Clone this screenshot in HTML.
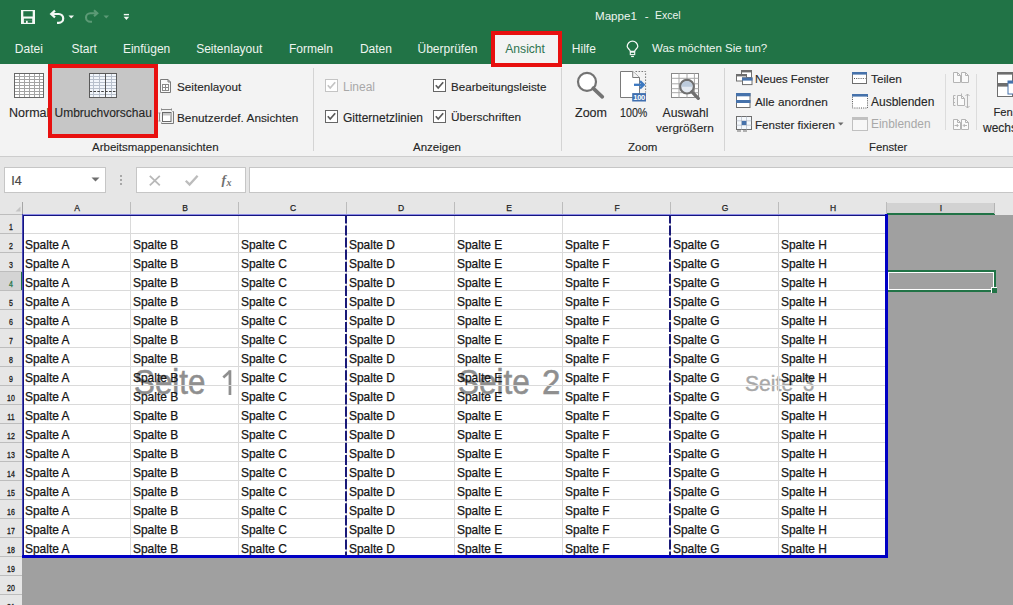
<!DOCTYPE html>
<html><head><meta charset="utf-8"><style>
html,body{margin:0;padding:0;width:1013px;height:605px;overflow:hidden;background:#a0a0a0;}
body{position:relative;font-family:"Liberation Sans",sans-serif;}
.t{position:absolute;white-space:nowrap;line-height:1;font-family:"Liberation Sans",sans-serif;}
.r{position:absolute;}
.s{position:absolute;overflow:visible;}
.hd{text-align:center;font-size:8.5px;line-height:11px;color:#1e1e1e;-webkit-text-stroke:0.25px #1e1e1e;}
.rh{text-align:center;font-size:8.5px;line-height:8px;transform:scaleX(0.82);-webkit-text-stroke:0.3px currentColor;}
</style></head><body>
<div class="r" style="left:0px;top:0px;width:1013px;height:64px;background:#217346;"></div>
<svg class="s" style="left:20px;top:9px;" width="16" height="16" viewBox="0 0 16 16"><rect x="1" y="1" width="14" height="14" fill="#f4f8f5"/><rect x="3.3" y="2.2" width="9.4" height="5.3" fill="#217346"/><rect x="3.9" y="9.6" width="8.3" height="2.1" fill="#217346"/><rect x="3.9" y="11.5" width="2.1" height="2.3" fill="#217346"/><rect x="7.7" y="11.5" width="4.5" height="2.3" fill="#217346"/></svg>
<svg class="s" style="left:48px;top:8px;" width="18" height="17" viewBox="0 0 18 17"><path d="M4 6 H10.8 A4.4 4.4 0 0 1 10.8 14.8 H9" fill="none" stroke="#f4f8f5" stroke-width="2.2"/><path d="M7 2.6 L3.2 6 L7 9.4" fill="none" stroke="#f4f8f5" stroke-width="2.2"/></svg>
<svg class="s" style="left:68px;top:15px;" width="7" height="4" viewBox="0 0 7 4"><path d="M0.5 0.5 H6 L3.25 3.5 Z" fill="#f4f8f5"/></svg>
<svg class="s" style="left:83px;top:7px;" width="18" height="17" viewBox="0 0 18 17"><path d="M13.6 6.2 H7.3 A4.3 4.3 0 0 0 7.3 14.8 H9" fill="none" stroke="#5c9a76" stroke-width="2.1"/><path d="M11 3.3 L14.3 6.2 L11 9.1" fill="none" stroke="#5c9a76" stroke-width="2.1"/></svg>
<svg class="s" style="left:103px;top:15px;" width="7" height="4" viewBox="0 0 7 4"><path d="M0.5 0.5 H6 L3.25 3.5 Z" fill="#5c9a76"/></svg>
<svg class="s" style="left:122px;top:12px;" width="9" height="9" viewBox="0 0 9 9"><rect x="1.8" y="1.9" width="5.2" height="1.4" fill="#f4f8f5"/><path d="M1.6 4.8 H7.2 L4.4 8 Z" fill="#f4f8f5"/></svg>
<div class="t" style="left:595.00px;top:10.29px;font-size:11.6px;color:#eef5f0;">Mappe1</div>
<div class="t" style="left:644.80px;top:10.29px;font-size:11.6px;color:#eef5f0;">-</div>
<div class="t" style="left:655.30px;top:10.37px;font-size:11.5px;color:#eef5f0;transform-origin:0 0;transform:scaleX(0.91);">Excel</div>
<div class="t" style="left:14.80px;top:42.85px;font-size:12px;color:#eef5f0;">Datei</div>
<div class="t" style="left:71.50px;top:42.85px;font-size:12px;color:#eef5f0;">Start</div>
<div class="t" style="left:122.90px;top:42.85px;font-size:12px;color:#eef5f0;">Einfügen</div>
<div class="t" style="left:196.20px;top:42.85px;font-size:12px;color:#eef5f0;">Seitenlayout</div>
<div class="t" style="left:288.90px;top:42.85px;font-size:12px;color:#eef5f0;">Formeln</div>
<div class="t" style="left:359.90px;top:42.85px;font-size:12px;color:#eef5f0;">Daten</div>
<div class="t" style="left:417.50px;top:42.85px;font-size:12px;color:#eef5f0;">Überprüfen</div>
<div class="t" style="left:571.80px;top:42.85px;font-size:12px;color:#eef5f0;">Hilfe</div>
<div class="r" style="left:491px;top:31px;width:71px;height:36px;background:#f3f3f3;border:4px solid #e8100f;box-sizing:border-box;"></div>
<div class="t" style="left:505.30px;top:42.76px;font-size:12.1px;color:#2f7350;">Ansicht</div>
<svg class="s" style="left:625px;top:40px;" width="16" height="18" viewBox="0 0 16 18"><path d="M5.3 11.3 C5.1 9.6 2.2 8.3 2.2 6.5 A5.3 5.3 0 1 1 12.8 6.5 C12.8 8.3 9.9 9.6 9.7 11.3 Z" fill="none" stroke="#f4f8f5" stroke-width="1.25"/><rect x="5.3" y="12.2" width="4.4" height="2.4" fill="none" stroke="#f4f8f5" stroke-width="1.1"/><path d="M6.1 16.5 H8.9" stroke="#f4f8f5" stroke-width="1.2"/></svg>
<div class="t" style="left:652.00px;top:43.27px;font-size:11.5px;color:#eef5f0;">Was möchten Sie tun?</div>
<div class="r" style="left:0px;top:64px;width:1013px;height:92px;background:#f3f3f3;"></div>
<div class="r" style="left:491px;top:64px;width:71px;height:3px;background:#e8100f;"></div>
<div class="r" style="left:0px;top:156px;width:1013px;height:1px;background:#cdcdcd;"></div>
<div class="r" style="left:313px;top:68px;width:1px;height:83px;background:#d4d4d4;"></div>
<div class="r" style="left:561px;top:68px;width:1px;height:83px;background:#d4d4d4;"></div>
<div class="r" style="left:724px;top:68px;width:1px;height:83px;background:#d4d4d4;"></div>
<div class="r" style="left:945px;top:74px;width:1px;height:56px;background:#dcdcdc;"></div>
<div class="r" style="left:976px;top:74px;width:1px;height:56px;background:#dcdcdc;"></div>
<svg class="s" style="left:13px;top:72px;" width="33" height="27" viewBox="0 0 33 27"><rect x="1.5" y="1.5" width="29" height="24" fill="#fff"/><path d="M6.5 1.5 V25.5" stroke="#a4a4a4" stroke-width="1"/><path d="M11.5 1.5 V25.5" stroke="#a4a4a4" stroke-width="1"/><path d="M16.5 1.5 V25.5" stroke="#a4a4a4" stroke-width="1"/><path d="M21.5 1.5 V25.5" stroke="#a4a4a4" stroke-width="1"/><path d="M26.5 1.5 V25.5" stroke="#a4a4a4" stroke-width="1"/><path d="M1.5 4.5 H30.5" stroke="#a4a4a4" stroke-width="1"/><path d="M1.5 7.5 H30.5" stroke="#a4a4a4" stroke-width="1"/><path d="M1.5 10.5 H30.5" stroke="#a4a4a4" stroke-width="1"/><path d="M1.5 13.5 H30.5" stroke="#a4a4a4" stroke-width="1"/><path d="M1.5 16.5 H30.5" stroke="#a4a4a4" stroke-width="1"/><path d="M1.5 19.5 H30.5" stroke="#a4a4a4" stroke-width="1"/><path d="M1.5 22.5 H30.5" stroke="#a4a4a4" stroke-width="1"/><rect x="1.5" y="1.5" width="29" height="24" fill="none" stroke="#666" stroke-width="1"/></svg>
<div class="t" style="left:9.00px;top:107.42px;font-size:12.5px;color:#262626;-webkit-text-stroke:0.12px #262626;">Normal</div>
<div class="r" style="left:48px;top:64px;width:110px;height:74px;background:#c6c6c6;border:4px solid #e8100f;box-sizing:border-box;"></div>
<svg class="s" style="left:88px;top:72px;" width="31" height="27" viewBox="0 0 31 27"><rect x="1.5" y="1.5" width="27" height="24" fill="#f2f6fb"/><path d="M5.5 1.5 V25.5" stroke="#b8c0cc" stroke-width="1"/><path d="M11.5 1.5 V25.5" stroke="#b8c0cc" stroke-width="1"/><path d="M23.5 1.5 V25.5" stroke="#b8c0cc" stroke-width="1"/><path d="M1.5 4.5 H28.5" stroke="#b8c0cc" stroke-width="1"/><path d="M1.5 7.5 H28.5" stroke="#b8c0cc" stroke-width="1"/><path d="M1.5 10.5 H28.5" stroke="#b8c0cc" stroke-width="1"/><path d="M1.5 13.5 H28.5" stroke="#b8c0cc" stroke-width="1"/><path d="M1.5 16.5 H28.5" stroke="#b8c0cc" stroke-width="1"/><path d="M1.5 22.5 H28.5" stroke="#b8c0cc" stroke-width="1"/><path d="M17.5 1.5 V25.5" stroke="#555" stroke-width="1"/><path d="M1.5 19.5 H28.5" stroke="#444" stroke-width="1.1" stroke-dasharray="2.6 1.3"/><rect x="1.5" y="1.5" width="27" height="24" fill="none" stroke="#5a5a5a" stroke-width="1"/></svg>
<div class="t" style="left:54.50px;top:106.85px;font-size:12px;color:#262626;-webkit-text-stroke:0.12px #262626;">Umbruchvorschau</div>
<svg class="s" style="left:159px;top:78px;" width="14" height="16" viewBox="0 0 14 16"><path d="M1.5 1.5 H9 L11.5 4 V14.5 H1.5 Z" fill="#fafafa" stroke="#7a7a7a"/><path d="M9 1.5 V4 H11.5" fill="none" stroke="#7a7a7a"/><rect x="3.5" y="6.5" width="6" height="6" fill="#fff" stroke="#8a8a8a"/><path d="M6.5 6.5 V12.5 M3.5 9.5 H9.5" stroke="#8a8a8a"/></svg>
<div class="t" style="left:177.00px;top:81.10px;font-size:11.7px;color:#262626;-webkit-text-stroke:0.12px #262626;">Seitenlayout</div>
<svg class="s" style="left:157px;top:108px;" width="18" height="18" viewBox="0 0 18 18"><path d="M4.5 1.5 H14.5 M4.5 0.5 V2.5 M14.5 0.5 V2.5 M2.5 5 V13 M1.5 5 H3.5 M1.5 13 H3.5" fill="none" stroke="#8a8a8a"/><rect x="5.5" y="4.5" width="8.5" height="9" fill="#fff" stroke="#6a6a6a"/><rect x="6" y="5" width="7.5" height="2.5" fill="#c8c8c8"/><path d="M15.5 3.5 H16.5 V15.5 H4.5 V14.5" fill="none" stroke="#7a7a7a"/></svg>
<div class="t" style="left:177.00px;top:112.82px;font-size:11.8px;color:#262626;-webkit-text-stroke:0.12px #262626;">Benutzerdef. Ansichten</div>
<div class="t" style="left:92.00px;top:142.37px;font-size:11.5px;color:#262626;-webkit-text-stroke:0.12px #262626;">Arbeitsmappenansichten</div>
<svg class="s" style="left:325px;top:79px;" width="13" height="13" viewBox="0 0 13 13"><rect x="0.5" y="0.5" width="12" height="12" fill="#fff" stroke="#c4c4c4"/><path d="M2.8 6.3 L5.2 9 L10.2 3.2" fill="none" stroke="#c4c4c4" stroke-width="1.7"/></svg>
<div class="t" style="left:343.00px;top:80.85px;font-size:12px;color:#a8a8a8;">Lineal</div>
<svg class="s" style="left:325px;top:110px;" width="13" height="13" viewBox="0 0 13 13"><rect x="0.5" y="0.5" width="12" height="12" fill="#fff" stroke="#666"/><path d="M2.8 6.3 L5.2 9 L10.2 3.2" fill="none" stroke="#5a5a5a" stroke-width="1.7"/></svg>
<div class="t" style="left:343.00px;top:111.85px;font-size:12px;color:#262626;-webkit-text-stroke:0.12px #262626;">Gitternetzlinien</div>
<svg class="s" style="left:433px;top:79px;" width="13" height="13" viewBox="0 0 13 13"><rect x="0.5" y="0.5" width="12" height="12" fill="#fff" stroke="#666"/><path d="M2.8 6.3 L5.2 9 L10.2 3.2" fill="none" stroke="#5a5a5a" stroke-width="1.7"/></svg>
<div class="t" style="left:451.00px;top:81.19px;font-size:11.6px;color:#262626;-webkit-text-stroke:0.12px #262626;">Bearbeitungsleiste</div>
<svg class="s" style="left:433px;top:110px;" width="13" height="13" viewBox="0 0 13 13"><rect x="0.5" y="0.5" width="12" height="12" fill="#fff" stroke="#666"/><path d="M2.8 6.3 L5.2 9 L10.2 3.2" fill="none" stroke="#5a5a5a" stroke-width="1.7"/></svg>
<div class="t" style="left:451.00px;top:112.02px;font-size:11.8px;color:#262626;-webkit-text-stroke:0.12px #262626;">Überschriften</div>
<div class="t" style="left:413.00px;top:142.27px;font-size:11.5px;color:#262626;-webkit-text-stroke:0.12px #262626;">Anzeigen</div>
<svg class="s" style="left:575px;top:70px;" width="32" height="30" viewBox="0 0 32 30"><circle cx="12" cy="11.8" r="9" fill="#fff" stroke="#737373" stroke-width="2.2"/><path d="M18.3 18.3 L27.3 26.8" stroke="#737373" stroke-width="3.7" stroke-linecap="round"/></svg>
<div class="t" style="left:575.00px;top:107.42px;font-size:12.5px;color:#262626;-webkit-text-stroke:0.12px #262626;">Zoom</div>
<svg class="s" style="left:619px;top:70px;" width="30" height="33" viewBox="0 0 30 33"><path d="M1.5 1.5 H13.7 L20.5 7.5 V27.5 H1.5 Z" fill="#fff" stroke="#7a7a7a"/><path d="M13.7 1.5 V7.5 H20.5" fill="#f4f4f4" stroke="#7a7a7a"/><path d="M16.5 1.5 H26.6 V22.5" fill="none" stroke="#7a7a7a" stroke-dasharray="1.6 1.4"/><path d="M15 14.8 H24.2" stroke="#3c78c0" stroke-width="2.3"/><path d="M21 11.2 L24.8 14.8 L21 18.4" fill="none" stroke="#3c78c0" stroke-width="2.3"/><rect x="13.2" y="23.1" width="13.8" height="8.4" fill="#3f6fb0"/><text x="20.1" y="30.2" font-size="7.6" font-family="Liberation Sans" fill="#fff" text-anchor="middle" font-weight="bold" letter-spacing="-0.3">100</text></svg>
<div class="t" style="left:619.50px;top:106.85px;font-size:12px;color:#262626;-webkit-text-stroke:0.12px #262626;transform-origin:0 0;transform:scaleX(0.89);">100%</div>
<svg class="s" style="left:670px;top:72px;" width="32" height="30" viewBox="0 0 32 30"><rect x="1.5" y="1.5" width="27" height="24" fill="#fff" stroke="#8a8a8a"/><path d="M9 1.5 V25.5 M17 1.5 V25.5 M24.4 1.5 V25.5 M1.5 6.3 H28.5 M1.5 11.8 H28.5 M1.5 16.7 H28.5 M1.5 20.7 H28.5" stroke="#a8a8a8"/><circle cx="17" cy="14.7" r="6.8" fill="#e4eaf1" stroke="#707070" stroke-width="2.2"/><path d="M11.3 14.7 A5.7 5.7 0 0 1 22.7 14.7 Z" fill="#bccbdc"/><path d="M22 19.8 L28.3 26.3" stroke="#707070" stroke-width="3.3" stroke-linecap="round"/></svg>
<div class="t" style="left:662.50px;top:106.68px;font-size:12.2px;color:#262626;-webkit-text-stroke:0.12px #262626;">Auswahl</div>
<div class="t" style="left:656.00px;top:122.52px;font-size:11.8px;color:#262626;-webkit-text-stroke:0.12px #262626;">vergrößern</div>
<div class="t" style="left:628.00px;top:142.27px;font-size:11.5px;color:#262626;-webkit-text-stroke:0.12px #262626;">Zoom</div>
<svg class="s" style="left:735px;top:69px;" width="18" height="17" viewBox="0 0 18 17"><rect x="6.5" y="1.5" width="10" height="7" fill="#fff" stroke="#6e6e6e"/><rect x="6" y="1" width="11" height="2.4" fill="#6e6e6e"/><rect x="1.5" y="5.5" width="10" height="6.5" fill="#fff" stroke="#6e6e6e"/><rect x="1" y="5" width="11" height="2.4" fill="#6e6e6e"/><rect x="7.5" y="8.8" width="9.5" height="6.8" fill="#fff" stroke="#6e6e6e"/><rect x="7" y="8.6" width="10.5" height="3" fill="#4672ab"/></svg>
<div class="t" style="left:755.00px;top:74.24px;font-size:11.3px;color:#262626;-webkit-text-stroke:0.12px #262626;">Neues Fenster</div>
<svg class="s" style="left:736px;top:93px;" width="15" height="15" viewBox="0 0 15 15"><rect x="0.5" y="0.5" width="13.5" height="14" fill="#fff" stroke="#6e6e6e"/><rect x="0" y="0" width="14.5" height="3.3" fill="#4672ab"/><rect x="0" y="7" width="14.5" height="3" fill="#4672ab"/></svg>
<div class="t" style="left:755.00px;top:96.72px;font-size:11.8px;color:#262626;-webkit-text-stroke:0.12px #262626;">Alle anordnen</div>
<svg class="s" style="left:735px;top:116px;" width="17" height="16" viewBox="0 0 17 16"><rect x="1.5" y="0.5" width="15" height="13" fill="#f4f8fc" stroke="#6e6e6e"/><path d="M1.5 4.8 H16.5 M1.5 9.2 H16.5 M6.5 0.5 V13.5 M11.5 0.5 V13.5" stroke="#9aa4b4" stroke-dasharray="1 1"/><rect x="6.8" y="5" width="4.6" height="4" fill="#4672ab"/><path d="M2 15 H6 M8 15 H12" stroke="#6e6e6e"/></svg>
<div class="t" style="left:755.00px;top:119.19px;font-size:11.6px;color:#262626;-webkit-text-stroke:0.12px #262626;">Fenster fixieren</div>
<svg class="s" style="left:838px;top:122px;" width="6" height="4" viewBox="0 0 6 4"><path d="M0 0.5 H5.5 L2.75 3.5 Z" fill="#6a6a6a"/></svg>
<svg class="s" style="left:851px;top:71px;" width="17" height="14" viewBox="0 0 17 14"><rect x="1.5" y="1.5" width="14" height="11" fill="#fff" stroke="#6e6e6e"/><rect x="1" y="1" width="15" height="2.6" fill="#4672ab"/><path d="M3 7.5 H14.5" stroke="#555" stroke-dasharray="1 1.2"/></svg>
<div class="t" style="left:871.00px;top:73.82px;font-size:11.8px;color:#262626;-webkit-text-stroke:0.12px #262626;">Teilen</div>
<svg class="s" style="left:851px;top:94px;" width="18" height="15" viewBox="0 0 18 15"><rect x="1.5" y="1.5" width="15" height="12.5" fill="#fff" stroke="#555" stroke-dasharray="1 1.2"/><rect x="1" y="0" width="16" height="2.6" fill="#4672ab"/></svg>
<div class="t" style="left:871.00px;top:95.85px;font-size:12px;color:#262626;-webkit-text-stroke:0.12px #262626;">Ausblenden</div>
<svg class="s" style="left:851px;top:116px;" width="18" height="15" viewBox="0 0 18 15"><rect x="1.5" y="1.5" width="15" height="13" fill="#f7f7f7" stroke="#c0c0c0"/><rect x="1" y="1" width="16" height="3" fill="#c0c0c0"/></svg>
<div class="t" style="left:871.00px;top:119.43px;font-size:11.9px;color:#a8a8a8;">Einblenden</div>
<div class="t" style="left:869.00px;top:142.24px;font-size:11.3px;color:#262626;-webkit-text-stroke:0.12px #262626;">Fenster</div>
<svg class="s" style="left:953px;top:72px;" width="17" height="12" viewBox="0 0 17 12"><path d="M0.5 0.5 H4.5 L7.5 3.5 V10.5 H0.5 Z" fill="#fafafa" stroke="#b4b4b4"/><path d="M4.5 0.5 V3.5 H7.5" fill="none" stroke="#b4b4b4"/><path d="M8.5 0.5 H12.5 L15.5 3.5 V10.5 H8.5 Z" fill="#fafafa" stroke="#b4b4b4"/><path d="M12.5 0.5 V3.5 H15.5" fill="none" stroke="#b4b4b4"/></svg>
<svg class="s" style="left:953px;top:93px;" width="17" height="16" viewBox="0 0 17 16"><path d="M2.5 2.5 H0.5 V12.5 H2.5" fill="none" stroke="#b4b4b4"/><path d="M1 5.5 H2 M1 9.5 H2" stroke="#b4b4b4"/><path d="M4.5 2.5 H8.5 L11.5 5.5 V12.5 H4.5 Z" fill="#fafafa" stroke="#b4b4b4"/><path d="M8.5 0.5 V5.5 H11.5" fill="none" stroke="#b4b4b4"/><path d="M14.5 1 V15 M12.5 3 L14.5 1 L16.5 3 M12.5 13 L14.5 15 L16.5 13" fill="none" stroke="#b4b4b4"/></svg>
<svg class="s" style="left:953px;top:119px;" width="17" height="12" viewBox="0 0 17 12"><path d="M0.5 0.5 H4.5 L7.5 3.5 V10.5 H0.5 Z" fill="#fafafa" stroke="#b4b4b4"/><path d="M4.5 0.5 V3.5 H7.5" fill="none" stroke="#b4b4b4"/><path d="M8.5 0.5 H12.5 L15.5 3.5 V10.5 H8.5 Z" fill="#fafafa" stroke="#b4b4b4"/><path d="M12.5 0.5 V3.5 H15.5" fill="none" stroke="#b4b4b4"/><path d="M1.5 6.5 H5 M3.8 5 L5.3 6.5 L3.8 8 M14 6.5 H10.5 M11.7 5 L10.2 6.5 L11.7 8" fill="none" stroke="#b4b4b4"/></svg>
<svg class="s" style="left:996px;top:71px;" width="17" height="27" viewBox="0 0 17 27"><rect x="1.5" y="1.5" width="15" height="11" fill="#fff" stroke="#6e6e6e"/><rect x="1" y="1" width="16" height="2.6" fill="#6e6e6e"/><rect x="1.5" y="13.5" width="15" height="12" fill="#fff" stroke="#6e6e6e"/><rect x="1" y="13" width="16" height="2.6" fill="#6e6e6e"/><rect x="12" y="10" width="6" height="13" fill="#fff" stroke="#4672ab"/><rect x="12" y="10" width="6" height="2.6" fill="#4672ab"/></svg>
<div class="t" style="left:993.50px;top:106.82px;font-size:11.2px;color:#262626;-webkit-text-stroke:0.12px #262626;">Fenster</div>
<div class="t" style="left:983.00px;top:122.15px;font-size:12px;color:#262626;-webkit-text-stroke:0.12px #262626;">wechseln</div>
<div class="r" style="left:0px;top:157px;width:1013px;height:46px;background:#e6e6e6;"></div>
<div class="r" style="left:4px;top:167px;width:102px;height:26px;background:#ffffff;border:1px solid #c6c6c6;box-sizing:border-box;"></div>
<div class="t" style="left:11.30px;top:175.43px;font-size:12.5px;color:#474747;-webkit-text-stroke:0.2px #474747;">I4</div>
<svg class="s" style="left:91px;top:177px;" width="9" height="5" viewBox="0 0 9 5"><path d="M0.5 0.5 H8.5 L4.5 4.5 Z" fill="#6e6e6e"/></svg>
<div class="r" style="left:120px;top:175px;width:2px;height:2px;background:#a8a8a8;"></div>
<div class="r" style="left:120px;top:179px;width:2px;height:2px;background:#a8a8a8;"></div>
<div class="r" style="left:120px;top:183px;width:2px;height:2px;background:#a8a8a8;"></div>
<div class="r" style="left:136px;top:167px;width:110px;height:26px;background:#ffffff;border:1px solid #c6c6c6;box-sizing:border-box;"></div>
<svg class="s" style="left:148px;top:174px;" width="14" height="13" viewBox="0 0 14 13"><path d="M1.8 1.8 L11.8 11.3 M11.8 1.8 L1.8 11.3" stroke="#b8b8b8" stroke-width="1.8"/></svg>
<svg class="s" style="left:184px;top:174px;" width="15" height="13" viewBox="0 0 15 13"><path d="M1.8 6.8 L5.6 10.6 L13.6 1.8" fill="none" stroke="#bcbcbc" stroke-width="2.3"/></svg>
<div class="t" style="left:221.5px;top:172.5px;font-family:'Liberation Serif',serif;font-style:italic;font-weight:bold;font-size:13.5px;color:#707070;line-height:1;">f</div>
<div class="t" style="left:226.5px;top:177.5px;font-family:'Liberation Serif',serif;font-style:italic;font-weight:bold;font-size:10px;color:#707070;line-height:1;">x</div>
<div class="r" style="left:249px;top:167px;width:764px;height:26px;background:#ffffff;border:1px solid #c6c6c6;box-sizing:border-box;border-right:none;"></div>
<div class="r" style="left:0px;top:203px;width:1013px;height:402px;background:#a0a0a0;"></div>
<div class="r" style="left:0px;top:196px;width:1013px;height:19px;background:#e6e6e6;"></div>
<div class="r" style="left:887px;top:214px;width:126px;height:1px;background:#e6e6e6;"></div>
<div class="r" style="left:0px;top:214px;width:22px;height:391px;background:#e6e6e6;"></div>
<svg class="s" style="left:15px;top:206px;" width="6" height="6" viewBox="0 0 6 6"><path d="M5.5 0.5 V5.5 H0.5 Z" fill="#c4c4c4"/></svg>
<div class="r" style="left:0px;top:214px;width:22px;height:1px;background:#bdbdbd;"></div>
<div class="r" style="left:22px;top:202px;width:1px;height:12px;background:#a6a6a6;"></div>
<div class="r" style="left:130px;top:202px;width:1px;height:12px;background:#bcbcbc;"></div>
<div class="t hd" style="left:23px;top:203px;width:108px;">A</div>
<div class="r" style="left:238px;top:202px;width:1px;height:12px;background:#bcbcbc;"></div>
<div class="t hd" style="left:131px;top:203px;width:108px;">B</div>
<div class="r" style="left:346px;top:202px;width:1px;height:12px;background:#bcbcbc;"></div>
<div class="t hd" style="left:239px;top:203px;width:108px;">C</div>
<div class="r" style="left:454px;top:202px;width:1px;height:12px;background:#bcbcbc;"></div>
<div class="t hd" style="left:347px;top:203px;width:108px;">D</div>
<div class="r" style="left:562px;top:202px;width:1px;height:12px;background:#bcbcbc;"></div>
<div class="t hd" style="left:455px;top:203px;width:108px;">E</div>
<div class="r" style="left:670px;top:202px;width:1px;height:12px;background:#bcbcbc;"></div>
<div class="t hd" style="left:563px;top:203px;width:108px;">F</div>
<div class="r" style="left:778px;top:202px;width:1px;height:12px;background:#bcbcbc;"></div>
<div class="t hd" style="left:671px;top:203px;width:108px;">G</div>
<div class="r" style="left:886px;top:202px;width:1px;height:12px;background:#bcbcbc;"></div>
<div class="t hd" style="left:779px;top:203px;width:108px;">H</div>
<div class="r" style="left:887px;top:203px;width:108px;height:11px;background:#d2d2d2;"></div>
<div class="r" style="left:887px;top:213px;width:108px;height:2px;background:#217346;"></div>
<div class="r" style="left:994px;top:203px;width:1px;height:11px;background:#b4b4b4;"></div>
<div class="t hd" style="left:887px;top:203px;width:108px;">I</div>
<div class="r" style="left:23px;top:215px;width:864px;height:342px;background:#ffffff;"></div>
<div class="t" style="left:134.34px;top:364.87px;font-size:35.5px;color:#8f8f8f;transform-origin:0 0;transform:scaleX(0.8823);-webkit-text-stroke:0.59px #8f8f8f;">Seite</div>
<svg class="s" style="left:221.5px;top:369.9px;" width="12.0" height="26.0" viewBox="0 0 12.0 26.0"><path d="M1.3 7.5 L7.8 1.6" stroke="#8f8f8f" stroke-width="2.7"/><rect x="6.6" y="0.2" width="2.7" height="24.8" fill="#8f8f8f"/></svg>
<div class="t" style="left:457.94px;top:364.87px;font-size:35.5px;color:#8f8f8f;transform-origin:0 0;transform:scaleX(0.8884);-webkit-text-stroke:0.59px #8f8f8f;">Seite</div>
<div class="t" style="left:541.93px;top:364.87px;font-size:35.5px;color:#8f8f8f;transform-origin:0 0;transform:scaleX(0.93);-webkit-text-stroke:0.59px #8f8f8f;">2</div>
<div class="t" style="left:744.55px;top:373.26px;font-size:21.8px;color:#a8a8a8;transform-origin:0 0;transform:scaleX(0.9698);-webkit-text-stroke:0.36px #a8a8a8;">Seite</div>
<div class="t" style="left:802.75px;top:373.26px;font-size:21.8px;color:#a8a8a8;transform-origin:0 0;transform:scaleX(0.93);-webkit-text-stroke:0.36px #a8a8a8;">3</div>
<div class="r" style="left:23px;top:233px;width:864px;height:1px;background:#dadada;"></div>
<div class="r" style="left:23px;top:252px;width:864px;height:1px;background:#dadada;"></div>
<div class="r" style="left:23px;top:271px;width:864px;height:1px;background:#dadada;"></div>
<div class="r" style="left:23px;top:290px;width:864px;height:1px;background:#dadada;"></div>
<div class="r" style="left:23px;top:309px;width:864px;height:1px;background:#dadada;"></div>
<div class="r" style="left:23px;top:328px;width:864px;height:1px;background:#dadada;"></div>
<div class="r" style="left:23px;top:347px;width:864px;height:1px;background:#dadada;"></div>
<div class="r" style="left:23px;top:366px;width:864px;height:1px;background:#dadada;"></div>
<div class="r" style="left:23px;top:385px;width:864px;height:1px;background:#dadada;"></div>
<div class="r" style="left:23px;top:404px;width:864px;height:1px;background:#dadada;"></div>
<div class="r" style="left:23px;top:423px;width:864px;height:1px;background:#dadada;"></div>
<div class="r" style="left:23px;top:442px;width:864px;height:1px;background:#dadada;"></div>
<div class="r" style="left:23px;top:461px;width:864px;height:1px;background:#dadada;"></div>
<div class="r" style="left:23px;top:480px;width:864px;height:1px;background:#dadada;"></div>
<div class="r" style="left:23px;top:499px;width:864px;height:1px;background:#dadada;"></div>
<div class="r" style="left:23px;top:518px;width:864px;height:1px;background:#dadada;"></div>
<div class="r" style="left:23px;top:537px;width:864px;height:1px;background:#dadada;"></div>
<div class="r" style="left:130px;top:215px;width:1px;height:342px;background:#dadada;"></div>
<div class="r" style="left:238px;top:215px;width:1px;height:342px;background:#dadada;"></div>
<div class="r" style="left:346px;top:215px;width:1px;height:342px;background:#dadada;"></div>
<div class="r" style="left:454px;top:215px;width:1px;height:342px;background:#dadada;"></div>
<div class="r" style="left:562px;top:215px;width:1px;height:342px;background:#dadada;"></div>
<div class="r" style="left:670px;top:215px;width:1px;height:342px;background:#dadada;"></div>
<div class="r" style="left:778px;top:215px;width:1px;height:342px;background:#dadada;"></div>
<div class="r" style="left:0px;top:233px;width:22px;height:1px;background:#bdbdbd;"></div>
<div class="t rh" style="left:0px;top:222.6px;width:22px;color:#1a1a1a">1</div>
<div class="r" style="left:0px;top:252px;width:22px;height:1px;background:#bdbdbd;"></div>
<div class="t rh" style="left:0px;top:241.6px;width:22px;color:#1a1a1a">2</div>
<div class="r" style="left:0px;top:271px;width:22px;height:1px;background:#bdbdbd;"></div>
<div class="t rh" style="left:0px;top:260.6px;width:22px;color:#1a1a1a">3</div>
<div class="r" style="left:0px;top:272px;width:22px;height:18px;background:#d4d4d4;"></div>
<div class="r" style="left:21px;top:272px;width:1px;height:18px;background:#217346;"></div>
<div class="r" style="left:0px;top:290px;width:22px;height:1px;background:#bdbdbd;"></div>
<div class="t rh" style="left:0px;top:279.6px;width:22px;color:#217346">4</div>
<div class="r" style="left:0px;top:309px;width:22px;height:1px;background:#bdbdbd;"></div>
<div class="t rh" style="left:0px;top:298.6px;width:22px;color:#1a1a1a">5</div>
<div class="r" style="left:0px;top:328px;width:22px;height:1px;background:#bdbdbd;"></div>
<div class="t rh" style="left:0px;top:317.6px;width:22px;color:#1a1a1a">6</div>
<div class="r" style="left:0px;top:347px;width:22px;height:1px;background:#bdbdbd;"></div>
<div class="t rh" style="left:0px;top:336.6px;width:22px;color:#1a1a1a">7</div>
<div class="r" style="left:0px;top:366px;width:22px;height:1px;background:#bdbdbd;"></div>
<div class="t rh" style="left:0px;top:355.6px;width:22px;color:#1a1a1a">8</div>
<div class="r" style="left:0px;top:385px;width:22px;height:1px;background:#bdbdbd;"></div>
<div class="t rh" style="left:0px;top:374.6px;width:22px;color:#1a1a1a">9</div>
<div class="r" style="left:0px;top:404px;width:22px;height:1px;background:#bdbdbd;"></div>
<div class="t rh" style="left:0px;top:393.6px;width:22px;color:#1a1a1a">10</div>
<div class="r" style="left:0px;top:423px;width:22px;height:1px;background:#bdbdbd;"></div>
<div class="t rh" style="left:0px;top:412.6px;width:22px;color:#1a1a1a">11</div>
<div class="r" style="left:0px;top:442px;width:22px;height:1px;background:#bdbdbd;"></div>
<div class="t rh" style="left:0px;top:431.6px;width:22px;color:#1a1a1a">12</div>
<div class="r" style="left:0px;top:461px;width:22px;height:1px;background:#bdbdbd;"></div>
<div class="t rh" style="left:0px;top:450.6px;width:22px;color:#1a1a1a">13</div>
<div class="r" style="left:0px;top:480px;width:22px;height:1px;background:#bdbdbd;"></div>
<div class="t rh" style="left:0px;top:469.6px;width:22px;color:#1a1a1a">14</div>
<div class="r" style="left:0px;top:499px;width:22px;height:1px;background:#bdbdbd;"></div>
<div class="t rh" style="left:0px;top:488.6px;width:22px;color:#1a1a1a">15</div>
<div class="r" style="left:0px;top:518px;width:22px;height:1px;background:#bdbdbd;"></div>
<div class="t rh" style="left:0px;top:507.6px;width:22px;color:#1a1a1a">16</div>
<div class="r" style="left:0px;top:537px;width:22px;height:1px;background:#bdbdbd;"></div>
<div class="t rh" style="left:0px;top:526.6px;width:22px;color:#1a1a1a">17</div>
<div class="r" style="left:0px;top:556px;width:22px;height:1px;background:#bdbdbd;"></div>
<div class="t rh" style="left:0px;top:545.6px;width:22px;color:#1a1a1a">18</div>
<div class="r" style="left:0px;top:575px;width:22px;height:1px;background:#bdbdbd;"></div>
<div class="t rh" style="left:0px;top:564.6px;width:22px;color:#1a1a1a">19</div>
<div class="r" style="left:0px;top:594px;width:22px;height:1px;background:#bdbdbd;"></div>
<div class="t rh" style="left:0px;top:583.6px;width:22px;color:#1a1a1a">20</div>
<div class="r" style="left:0px;top:613px;width:22px;height:1px;background:#bdbdbd;"></div>
<div class="t rh" style="left:0px;top:602.6px;width:22px;color:#1a1a1a">21</div>
<div class="t" style="left:24.50px;top:238.68px;font-size:12.2px;color:#141414;-webkit-text-stroke:0.25px #141414;transform-origin:0 0;transform:scaleX(0.98);">Spalte A</div>
<div class="t" style="left:132.50px;top:238.68px;font-size:12.2px;color:#141414;-webkit-text-stroke:0.25px #141414;transform-origin:0 0;transform:scaleX(0.98);">Spalte B</div>
<div class="t" style="left:240.50px;top:238.68px;font-size:12.2px;color:#141414;-webkit-text-stroke:0.25px #141414;transform-origin:0 0;transform:scaleX(0.98);">Spalte C</div>
<div class="t" style="left:348.50px;top:238.68px;font-size:12.2px;color:#141414;-webkit-text-stroke:0.25px #141414;transform-origin:0 0;transform:scaleX(0.98);">Spalte D</div>
<div class="t" style="left:456.50px;top:238.68px;font-size:12.2px;color:#141414;-webkit-text-stroke:0.25px #141414;transform-origin:0 0;transform:scaleX(0.98);">Spalte E</div>
<div class="t" style="left:564.50px;top:238.68px;font-size:12.2px;color:#141414;-webkit-text-stroke:0.25px #141414;transform-origin:0 0;transform:scaleX(0.98);">Spalte F</div>
<div class="t" style="left:672.50px;top:238.68px;font-size:12.2px;color:#141414;-webkit-text-stroke:0.25px #141414;transform-origin:0 0;transform:scaleX(0.98);">Spalte G</div>
<div class="t" style="left:780.50px;top:238.68px;font-size:12.2px;color:#141414;-webkit-text-stroke:0.25px #141414;transform-origin:0 0;transform:scaleX(0.98);">Spalte H</div>
<div class="t" style="left:24.50px;top:257.68px;font-size:12.2px;color:#141414;-webkit-text-stroke:0.25px #141414;transform-origin:0 0;transform:scaleX(0.98);">Spalte A</div>
<div class="t" style="left:132.50px;top:257.68px;font-size:12.2px;color:#141414;-webkit-text-stroke:0.25px #141414;transform-origin:0 0;transform:scaleX(0.98);">Spalte B</div>
<div class="t" style="left:240.50px;top:257.68px;font-size:12.2px;color:#141414;-webkit-text-stroke:0.25px #141414;transform-origin:0 0;transform:scaleX(0.98);">Spalte C</div>
<div class="t" style="left:348.50px;top:257.68px;font-size:12.2px;color:#141414;-webkit-text-stroke:0.25px #141414;transform-origin:0 0;transform:scaleX(0.98);">Spalte D</div>
<div class="t" style="left:456.50px;top:257.68px;font-size:12.2px;color:#141414;-webkit-text-stroke:0.25px #141414;transform-origin:0 0;transform:scaleX(0.98);">Spalte E</div>
<div class="t" style="left:564.50px;top:257.68px;font-size:12.2px;color:#141414;-webkit-text-stroke:0.25px #141414;transform-origin:0 0;transform:scaleX(0.98);">Spalte F</div>
<div class="t" style="left:672.50px;top:257.68px;font-size:12.2px;color:#141414;-webkit-text-stroke:0.25px #141414;transform-origin:0 0;transform:scaleX(0.98);">Spalte G</div>
<div class="t" style="left:780.50px;top:257.68px;font-size:12.2px;color:#141414;-webkit-text-stroke:0.25px #141414;transform-origin:0 0;transform:scaleX(0.98);">Spalte H</div>
<div class="t" style="left:24.50px;top:276.68px;font-size:12.2px;color:#141414;-webkit-text-stroke:0.25px #141414;transform-origin:0 0;transform:scaleX(0.98);">Spalte A</div>
<div class="t" style="left:132.50px;top:276.68px;font-size:12.2px;color:#141414;-webkit-text-stroke:0.25px #141414;transform-origin:0 0;transform:scaleX(0.98);">Spalte B</div>
<div class="t" style="left:240.50px;top:276.68px;font-size:12.2px;color:#141414;-webkit-text-stroke:0.25px #141414;transform-origin:0 0;transform:scaleX(0.98);">Spalte C</div>
<div class="t" style="left:348.50px;top:276.68px;font-size:12.2px;color:#141414;-webkit-text-stroke:0.25px #141414;transform-origin:0 0;transform:scaleX(0.98);">Spalte D</div>
<div class="t" style="left:456.50px;top:276.68px;font-size:12.2px;color:#141414;-webkit-text-stroke:0.25px #141414;transform-origin:0 0;transform:scaleX(0.98);">Spalte E</div>
<div class="t" style="left:564.50px;top:276.68px;font-size:12.2px;color:#141414;-webkit-text-stroke:0.25px #141414;transform-origin:0 0;transform:scaleX(0.98);">Spalte F</div>
<div class="t" style="left:672.50px;top:276.68px;font-size:12.2px;color:#141414;-webkit-text-stroke:0.25px #141414;transform-origin:0 0;transform:scaleX(0.98);">Spalte G</div>
<div class="t" style="left:780.50px;top:276.68px;font-size:12.2px;color:#141414;-webkit-text-stroke:0.25px #141414;transform-origin:0 0;transform:scaleX(0.98);">Spalte H</div>
<div class="t" style="left:24.50px;top:295.68px;font-size:12.2px;color:#141414;-webkit-text-stroke:0.25px #141414;transform-origin:0 0;transform:scaleX(0.98);">Spalte A</div>
<div class="t" style="left:132.50px;top:295.68px;font-size:12.2px;color:#141414;-webkit-text-stroke:0.25px #141414;transform-origin:0 0;transform:scaleX(0.98);">Spalte B</div>
<div class="t" style="left:240.50px;top:295.68px;font-size:12.2px;color:#141414;-webkit-text-stroke:0.25px #141414;transform-origin:0 0;transform:scaleX(0.98);">Spalte C</div>
<div class="t" style="left:348.50px;top:295.68px;font-size:12.2px;color:#141414;-webkit-text-stroke:0.25px #141414;transform-origin:0 0;transform:scaleX(0.98);">Spalte D</div>
<div class="t" style="left:456.50px;top:295.68px;font-size:12.2px;color:#141414;-webkit-text-stroke:0.25px #141414;transform-origin:0 0;transform:scaleX(0.98);">Spalte E</div>
<div class="t" style="left:564.50px;top:295.68px;font-size:12.2px;color:#141414;-webkit-text-stroke:0.25px #141414;transform-origin:0 0;transform:scaleX(0.98);">Spalte F</div>
<div class="t" style="left:672.50px;top:295.68px;font-size:12.2px;color:#141414;-webkit-text-stroke:0.25px #141414;transform-origin:0 0;transform:scaleX(0.98);">Spalte G</div>
<div class="t" style="left:780.50px;top:295.68px;font-size:12.2px;color:#141414;-webkit-text-stroke:0.25px #141414;transform-origin:0 0;transform:scaleX(0.98);">Spalte H</div>
<div class="t" style="left:24.50px;top:314.68px;font-size:12.2px;color:#141414;-webkit-text-stroke:0.25px #141414;transform-origin:0 0;transform:scaleX(0.98);">Spalte A</div>
<div class="t" style="left:132.50px;top:314.68px;font-size:12.2px;color:#141414;-webkit-text-stroke:0.25px #141414;transform-origin:0 0;transform:scaleX(0.98);">Spalte B</div>
<div class="t" style="left:240.50px;top:314.68px;font-size:12.2px;color:#141414;-webkit-text-stroke:0.25px #141414;transform-origin:0 0;transform:scaleX(0.98);">Spalte C</div>
<div class="t" style="left:348.50px;top:314.68px;font-size:12.2px;color:#141414;-webkit-text-stroke:0.25px #141414;transform-origin:0 0;transform:scaleX(0.98);">Spalte D</div>
<div class="t" style="left:456.50px;top:314.68px;font-size:12.2px;color:#141414;-webkit-text-stroke:0.25px #141414;transform-origin:0 0;transform:scaleX(0.98);">Spalte E</div>
<div class="t" style="left:564.50px;top:314.68px;font-size:12.2px;color:#141414;-webkit-text-stroke:0.25px #141414;transform-origin:0 0;transform:scaleX(0.98);">Spalte F</div>
<div class="t" style="left:672.50px;top:314.68px;font-size:12.2px;color:#141414;-webkit-text-stroke:0.25px #141414;transform-origin:0 0;transform:scaleX(0.98);">Spalte G</div>
<div class="t" style="left:780.50px;top:314.68px;font-size:12.2px;color:#141414;-webkit-text-stroke:0.25px #141414;transform-origin:0 0;transform:scaleX(0.98);">Spalte H</div>
<div class="t" style="left:24.50px;top:333.68px;font-size:12.2px;color:#141414;-webkit-text-stroke:0.25px #141414;transform-origin:0 0;transform:scaleX(0.98);">Spalte A</div>
<div class="t" style="left:132.50px;top:333.68px;font-size:12.2px;color:#141414;-webkit-text-stroke:0.25px #141414;transform-origin:0 0;transform:scaleX(0.98);">Spalte B</div>
<div class="t" style="left:240.50px;top:333.68px;font-size:12.2px;color:#141414;-webkit-text-stroke:0.25px #141414;transform-origin:0 0;transform:scaleX(0.98);">Spalte C</div>
<div class="t" style="left:348.50px;top:333.68px;font-size:12.2px;color:#141414;-webkit-text-stroke:0.25px #141414;transform-origin:0 0;transform:scaleX(0.98);">Spalte D</div>
<div class="t" style="left:456.50px;top:333.68px;font-size:12.2px;color:#141414;-webkit-text-stroke:0.25px #141414;transform-origin:0 0;transform:scaleX(0.98);">Spalte E</div>
<div class="t" style="left:564.50px;top:333.68px;font-size:12.2px;color:#141414;-webkit-text-stroke:0.25px #141414;transform-origin:0 0;transform:scaleX(0.98);">Spalte F</div>
<div class="t" style="left:672.50px;top:333.68px;font-size:12.2px;color:#141414;-webkit-text-stroke:0.25px #141414;transform-origin:0 0;transform:scaleX(0.98);">Spalte G</div>
<div class="t" style="left:780.50px;top:333.68px;font-size:12.2px;color:#141414;-webkit-text-stroke:0.25px #141414;transform-origin:0 0;transform:scaleX(0.98);">Spalte H</div>
<div class="t" style="left:24.50px;top:352.68px;font-size:12.2px;color:#141414;-webkit-text-stroke:0.25px #141414;transform-origin:0 0;transform:scaleX(0.98);">Spalte A</div>
<div class="t" style="left:132.50px;top:352.68px;font-size:12.2px;color:#141414;-webkit-text-stroke:0.25px #141414;transform-origin:0 0;transform:scaleX(0.98);">Spalte B</div>
<div class="t" style="left:240.50px;top:352.68px;font-size:12.2px;color:#141414;-webkit-text-stroke:0.25px #141414;transform-origin:0 0;transform:scaleX(0.98);">Spalte C</div>
<div class="t" style="left:348.50px;top:352.68px;font-size:12.2px;color:#141414;-webkit-text-stroke:0.25px #141414;transform-origin:0 0;transform:scaleX(0.98);">Spalte D</div>
<div class="t" style="left:456.50px;top:352.68px;font-size:12.2px;color:#141414;-webkit-text-stroke:0.25px #141414;transform-origin:0 0;transform:scaleX(0.98);">Spalte E</div>
<div class="t" style="left:564.50px;top:352.68px;font-size:12.2px;color:#141414;-webkit-text-stroke:0.25px #141414;transform-origin:0 0;transform:scaleX(0.98);">Spalte F</div>
<div class="t" style="left:672.50px;top:352.68px;font-size:12.2px;color:#141414;-webkit-text-stroke:0.25px #141414;transform-origin:0 0;transform:scaleX(0.98);">Spalte G</div>
<div class="t" style="left:780.50px;top:352.68px;font-size:12.2px;color:#141414;-webkit-text-stroke:0.25px #141414;transform-origin:0 0;transform:scaleX(0.98);">Spalte H</div>
<div class="t" style="left:24.50px;top:371.68px;font-size:12.2px;color:#141414;-webkit-text-stroke:0.25px #141414;transform-origin:0 0;transform:scaleX(0.98);">Spalte A</div>
<div class="t" style="left:132.50px;top:371.68px;font-size:12.2px;color:#141414;-webkit-text-stroke:0.25px #141414;transform-origin:0 0;transform:scaleX(0.98);">Spalte B</div>
<div class="t" style="left:240.50px;top:371.68px;font-size:12.2px;color:#141414;-webkit-text-stroke:0.25px #141414;transform-origin:0 0;transform:scaleX(0.98);">Spalte C</div>
<div class="t" style="left:348.50px;top:371.68px;font-size:12.2px;color:#141414;-webkit-text-stroke:0.25px #141414;transform-origin:0 0;transform:scaleX(0.98);">Spalte D</div>
<div class="t" style="left:456.50px;top:371.68px;font-size:12.2px;color:#141414;-webkit-text-stroke:0.25px #141414;transform-origin:0 0;transform:scaleX(0.98);">Spalte E</div>
<div class="t" style="left:564.50px;top:371.68px;font-size:12.2px;color:#141414;-webkit-text-stroke:0.25px #141414;transform-origin:0 0;transform:scaleX(0.98);">Spalte F</div>
<div class="t" style="left:672.50px;top:371.68px;font-size:12.2px;color:#141414;-webkit-text-stroke:0.25px #141414;transform-origin:0 0;transform:scaleX(0.98);">Spalte G</div>
<div class="t" style="left:780.50px;top:371.68px;font-size:12.2px;color:#141414;-webkit-text-stroke:0.25px #141414;transform-origin:0 0;transform:scaleX(0.98);">Spalte H</div>
<div class="t" style="left:24.50px;top:390.68px;font-size:12.2px;color:#141414;-webkit-text-stroke:0.25px #141414;transform-origin:0 0;transform:scaleX(0.98);">Spalte A</div>
<div class="t" style="left:132.50px;top:390.68px;font-size:12.2px;color:#141414;-webkit-text-stroke:0.25px #141414;transform-origin:0 0;transform:scaleX(0.98);">Spalte B</div>
<div class="t" style="left:240.50px;top:390.68px;font-size:12.2px;color:#141414;-webkit-text-stroke:0.25px #141414;transform-origin:0 0;transform:scaleX(0.98);">Spalte C</div>
<div class="t" style="left:348.50px;top:390.68px;font-size:12.2px;color:#141414;-webkit-text-stroke:0.25px #141414;transform-origin:0 0;transform:scaleX(0.98);">Spalte D</div>
<div class="t" style="left:456.50px;top:390.68px;font-size:12.2px;color:#141414;-webkit-text-stroke:0.25px #141414;transform-origin:0 0;transform:scaleX(0.98);">Spalte E</div>
<div class="t" style="left:564.50px;top:390.68px;font-size:12.2px;color:#141414;-webkit-text-stroke:0.25px #141414;transform-origin:0 0;transform:scaleX(0.98);">Spalte F</div>
<div class="t" style="left:672.50px;top:390.68px;font-size:12.2px;color:#141414;-webkit-text-stroke:0.25px #141414;transform-origin:0 0;transform:scaleX(0.98);">Spalte G</div>
<div class="t" style="left:780.50px;top:390.68px;font-size:12.2px;color:#141414;-webkit-text-stroke:0.25px #141414;transform-origin:0 0;transform:scaleX(0.98);">Spalte H</div>
<div class="t" style="left:24.50px;top:409.68px;font-size:12.2px;color:#141414;-webkit-text-stroke:0.25px #141414;transform-origin:0 0;transform:scaleX(0.98);">Spalte A</div>
<div class="t" style="left:132.50px;top:409.68px;font-size:12.2px;color:#141414;-webkit-text-stroke:0.25px #141414;transform-origin:0 0;transform:scaleX(0.98);">Spalte B</div>
<div class="t" style="left:240.50px;top:409.68px;font-size:12.2px;color:#141414;-webkit-text-stroke:0.25px #141414;transform-origin:0 0;transform:scaleX(0.98);">Spalte C</div>
<div class="t" style="left:348.50px;top:409.68px;font-size:12.2px;color:#141414;-webkit-text-stroke:0.25px #141414;transform-origin:0 0;transform:scaleX(0.98);">Spalte D</div>
<div class="t" style="left:456.50px;top:409.68px;font-size:12.2px;color:#141414;-webkit-text-stroke:0.25px #141414;transform-origin:0 0;transform:scaleX(0.98);">Spalte E</div>
<div class="t" style="left:564.50px;top:409.68px;font-size:12.2px;color:#141414;-webkit-text-stroke:0.25px #141414;transform-origin:0 0;transform:scaleX(0.98);">Spalte F</div>
<div class="t" style="left:672.50px;top:409.68px;font-size:12.2px;color:#141414;-webkit-text-stroke:0.25px #141414;transform-origin:0 0;transform:scaleX(0.98);">Spalte G</div>
<div class="t" style="left:780.50px;top:409.68px;font-size:12.2px;color:#141414;-webkit-text-stroke:0.25px #141414;transform-origin:0 0;transform:scaleX(0.98);">Spalte H</div>
<div class="t" style="left:24.50px;top:428.68px;font-size:12.2px;color:#141414;-webkit-text-stroke:0.25px #141414;transform-origin:0 0;transform:scaleX(0.98);">Spalte A</div>
<div class="t" style="left:132.50px;top:428.68px;font-size:12.2px;color:#141414;-webkit-text-stroke:0.25px #141414;transform-origin:0 0;transform:scaleX(0.98);">Spalte B</div>
<div class="t" style="left:240.50px;top:428.68px;font-size:12.2px;color:#141414;-webkit-text-stroke:0.25px #141414;transform-origin:0 0;transform:scaleX(0.98);">Spalte C</div>
<div class="t" style="left:348.50px;top:428.68px;font-size:12.2px;color:#141414;-webkit-text-stroke:0.25px #141414;transform-origin:0 0;transform:scaleX(0.98);">Spalte D</div>
<div class="t" style="left:456.50px;top:428.68px;font-size:12.2px;color:#141414;-webkit-text-stroke:0.25px #141414;transform-origin:0 0;transform:scaleX(0.98);">Spalte E</div>
<div class="t" style="left:564.50px;top:428.68px;font-size:12.2px;color:#141414;-webkit-text-stroke:0.25px #141414;transform-origin:0 0;transform:scaleX(0.98);">Spalte F</div>
<div class="t" style="left:672.50px;top:428.68px;font-size:12.2px;color:#141414;-webkit-text-stroke:0.25px #141414;transform-origin:0 0;transform:scaleX(0.98);">Spalte G</div>
<div class="t" style="left:780.50px;top:428.68px;font-size:12.2px;color:#141414;-webkit-text-stroke:0.25px #141414;transform-origin:0 0;transform:scaleX(0.98);">Spalte H</div>
<div class="t" style="left:24.50px;top:447.68px;font-size:12.2px;color:#141414;-webkit-text-stroke:0.25px #141414;transform-origin:0 0;transform:scaleX(0.98);">Spalte A</div>
<div class="t" style="left:132.50px;top:447.68px;font-size:12.2px;color:#141414;-webkit-text-stroke:0.25px #141414;transform-origin:0 0;transform:scaleX(0.98);">Spalte B</div>
<div class="t" style="left:240.50px;top:447.68px;font-size:12.2px;color:#141414;-webkit-text-stroke:0.25px #141414;transform-origin:0 0;transform:scaleX(0.98);">Spalte C</div>
<div class="t" style="left:348.50px;top:447.68px;font-size:12.2px;color:#141414;-webkit-text-stroke:0.25px #141414;transform-origin:0 0;transform:scaleX(0.98);">Spalte D</div>
<div class="t" style="left:456.50px;top:447.68px;font-size:12.2px;color:#141414;-webkit-text-stroke:0.25px #141414;transform-origin:0 0;transform:scaleX(0.98);">Spalte E</div>
<div class="t" style="left:564.50px;top:447.68px;font-size:12.2px;color:#141414;-webkit-text-stroke:0.25px #141414;transform-origin:0 0;transform:scaleX(0.98);">Spalte F</div>
<div class="t" style="left:672.50px;top:447.68px;font-size:12.2px;color:#141414;-webkit-text-stroke:0.25px #141414;transform-origin:0 0;transform:scaleX(0.98);">Spalte G</div>
<div class="t" style="left:780.50px;top:447.68px;font-size:12.2px;color:#141414;-webkit-text-stroke:0.25px #141414;transform-origin:0 0;transform:scaleX(0.98);">Spalte H</div>
<div class="t" style="left:24.50px;top:466.68px;font-size:12.2px;color:#141414;-webkit-text-stroke:0.25px #141414;transform-origin:0 0;transform:scaleX(0.98);">Spalte A</div>
<div class="t" style="left:132.50px;top:466.68px;font-size:12.2px;color:#141414;-webkit-text-stroke:0.25px #141414;transform-origin:0 0;transform:scaleX(0.98);">Spalte B</div>
<div class="t" style="left:240.50px;top:466.68px;font-size:12.2px;color:#141414;-webkit-text-stroke:0.25px #141414;transform-origin:0 0;transform:scaleX(0.98);">Spalte C</div>
<div class="t" style="left:348.50px;top:466.68px;font-size:12.2px;color:#141414;-webkit-text-stroke:0.25px #141414;transform-origin:0 0;transform:scaleX(0.98);">Spalte D</div>
<div class="t" style="left:456.50px;top:466.68px;font-size:12.2px;color:#141414;-webkit-text-stroke:0.25px #141414;transform-origin:0 0;transform:scaleX(0.98);">Spalte E</div>
<div class="t" style="left:564.50px;top:466.68px;font-size:12.2px;color:#141414;-webkit-text-stroke:0.25px #141414;transform-origin:0 0;transform:scaleX(0.98);">Spalte F</div>
<div class="t" style="left:672.50px;top:466.68px;font-size:12.2px;color:#141414;-webkit-text-stroke:0.25px #141414;transform-origin:0 0;transform:scaleX(0.98);">Spalte G</div>
<div class="t" style="left:780.50px;top:466.68px;font-size:12.2px;color:#141414;-webkit-text-stroke:0.25px #141414;transform-origin:0 0;transform:scaleX(0.98);">Spalte H</div>
<div class="t" style="left:24.50px;top:485.68px;font-size:12.2px;color:#141414;-webkit-text-stroke:0.25px #141414;transform-origin:0 0;transform:scaleX(0.98);">Spalte A</div>
<div class="t" style="left:132.50px;top:485.68px;font-size:12.2px;color:#141414;-webkit-text-stroke:0.25px #141414;transform-origin:0 0;transform:scaleX(0.98);">Spalte B</div>
<div class="t" style="left:240.50px;top:485.68px;font-size:12.2px;color:#141414;-webkit-text-stroke:0.25px #141414;transform-origin:0 0;transform:scaleX(0.98);">Spalte C</div>
<div class="t" style="left:348.50px;top:485.68px;font-size:12.2px;color:#141414;-webkit-text-stroke:0.25px #141414;transform-origin:0 0;transform:scaleX(0.98);">Spalte D</div>
<div class="t" style="left:456.50px;top:485.68px;font-size:12.2px;color:#141414;-webkit-text-stroke:0.25px #141414;transform-origin:0 0;transform:scaleX(0.98);">Spalte E</div>
<div class="t" style="left:564.50px;top:485.68px;font-size:12.2px;color:#141414;-webkit-text-stroke:0.25px #141414;transform-origin:0 0;transform:scaleX(0.98);">Spalte F</div>
<div class="t" style="left:672.50px;top:485.68px;font-size:12.2px;color:#141414;-webkit-text-stroke:0.25px #141414;transform-origin:0 0;transform:scaleX(0.98);">Spalte G</div>
<div class="t" style="left:780.50px;top:485.68px;font-size:12.2px;color:#141414;-webkit-text-stroke:0.25px #141414;transform-origin:0 0;transform:scaleX(0.98);">Spalte H</div>
<div class="t" style="left:24.50px;top:504.68px;font-size:12.2px;color:#141414;-webkit-text-stroke:0.25px #141414;transform-origin:0 0;transform:scaleX(0.98);">Spalte A</div>
<div class="t" style="left:132.50px;top:504.68px;font-size:12.2px;color:#141414;-webkit-text-stroke:0.25px #141414;transform-origin:0 0;transform:scaleX(0.98);">Spalte B</div>
<div class="t" style="left:240.50px;top:504.68px;font-size:12.2px;color:#141414;-webkit-text-stroke:0.25px #141414;transform-origin:0 0;transform:scaleX(0.98);">Spalte C</div>
<div class="t" style="left:348.50px;top:504.68px;font-size:12.2px;color:#141414;-webkit-text-stroke:0.25px #141414;transform-origin:0 0;transform:scaleX(0.98);">Spalte D</div>
<div class="t" style="left:456.50px;top:504.68px;font-size:12.2px;color:#141414;-webkit-text-stroke:0.25px #141414;transform-origin:0 0;transform:scaleX(0.98);">Spalte E</div>
<div class="t" style="left:564.50px;top:504.68px;font-size:12.2px;color:#141414;-webkit-text-stroke:0.25px #141414;transform-origin:0 0;transform:scaleX(0.98);">Spalte F</div>
<div class="t" style="left:672.50px;top:504.68px;font-size:12.2px;color:#141414;-webkit-text-stroke:0.25px #141414;transform-origin:0 0;transform:scaleX(0.98);">Spalte G</div>
<div class="t" style="left:780.50px;top:504.68px;font-size:12.2px;color:#141414;-webkit-text-stroke:0.25px #141414;transform-origin:0 0;transform:scaleX(0.98);">Spalte H</div>
<div class="t" style="left:24.50px;top:523.68px;font-size:12.2px;color:#141414;-webkit-text-stroke:0.25px #141414;transform-origin:0 0;transform:scaleX(0.98);">Spalte A</div>
<div class="t" style="left:132.50px;top:523.68px;font-size:12.2px;color:#141414;-webkit-text-stroke:0.25px #141414;transform-origin:0 0;transform:scaleX(0.98);">Spalte B</div>
<div class="t" style="left:240.50px;top:523.68px;font-size:12.2px;color:#141414;-webkit-text-stroke:0.25px #141414;transform-origin:0 0;transform:scaleX(0.98);">Spalte C</div>
<div class="t" style="left:348.50px;top:523.68px;font-size:12.2px;color:#141414;-webkit-text-stroke:0.25px #141414;transform-origin:0 0;transform:scaleX(0.98);">Spalte D</div>
<div class="t" style="left:456.50px;top:523.68px;font-size:12.2px;color:#141414;-webkit-text-stroke:0.25px #141414;transform-origin:0 0;transform:scaleX(0.98);">Spalte E</div>
<div class="t" style="left:564.50px;top:523.68px;font-size:12.2px;color:#141414;-webkit-text-stroke:0.25px #141414;transform-origin:0 0;transform:scaleX(0.98);">Spalte F</div>
<div class="t" style="left:672.50px;top:523.68px;font-size:12.2px;color:#141414;-webkit-text-stroke:0.25px #141414;transform-origin:0 0;transform:scaleX(0.98);">Spalte G</div>
<div class="t" style="left:780.50px;top:523.68px;font-size:12.2px;color:#141414;-webkit-text-stroke:0.25px #141414;transform-origin:0 0;transform:scaleX(0.98);">Spalte H</div>
<div class="t" style="left:24.50px;top:542.68px;font-size:12.2px;color:#141414;-webkit-text-stroke:0.25px #141414;transform-origin:0 0;transform:scaleX(0.98);">Spalte A</div>
<div class="t" style="left:132.50px;top:542.68px;font-size:12.2px;color:#141414;-webkit-text-stroke:0.25px #141414;transform-origin:0 0;transform:scaleX(0.98);">Spalte B</div>
<div class="t" style="left:240.50px;top:542.68px;font-size:12.2px;color:#141414;-webkit-text-stroke:0.25px #141414;transform-origin:0 0;transform:scaleX(0.98);">Spalte C</div>
<div class="t" style="left:348.50px;top:542.68px;font-size:12.2px;color:#141414;-webkit-text-stroke:0.25px #141414;transform-origin:0 0;transform:scaleX(0.98);">Spalte D</div>
<div class="t" style="left:456.50px;top:542.68px;font-size:12.2px;color:#141414;-webkit-text-stroke:0.25px #141414;transform-origin:0 0;transform:scaleX(0.98);">Spalte E</div>
<div class="t" style="left:564.50px;top:542.68px;font-size:12.2px;color:#141414;-webkit-text-stroke:0.25px #141414;transform-origin:0 0;transform:scaleX(0.98);">Spalte F</div>
<div class="t" style="left:672.50px;top:542.68px;font-size:12.2px;color:#141414;-webkit-text-stroke:0.25px #141414;transform-origin:0 0;transform:scaleX(0.98);">Spalte G</div>
<div class="t" style="left:780.50px;top:542.68px;font-size:12.2px;color:#141414;-webkit-text-stroke:0.25px #141414;transform-origin:0 0;transform:scaleX(0.98);">Spalte H</div>
<div class="r" style="left:886px;top:270px;width:110px;height:22px;border:2px solid #217346;box-sizing:border-box;"></div>
<div class="r" style="left:888px;top:272px;width:106px;height:18px;border:1px solid #ffffff;box-sizing:border-box;"></div>
<div class="r" style="left:991px;top:287px;width:6px;height:6px;background:#ffffff;"></div>
<div class="r" style="left:992px;top:288px;width:5px;height:5px;background:#217346;"></div>
<div class="r" style="left:22px;top:214px;width:866px;height:1px;background:#8c8ce6;"></div>
<div class="r" style="left:22px;top:215px;width:866px;height:1px;background:#14147e;"></div>
<div class="r" style="left:22px;top:214px;width:1px;height:344px;background:#4a4ab8;"></div>
<div class="r" style="left:23px;top:215px;width:1px;height:343px;background:#14147e;"></div>
<div class="r" style="left:885px;top:214px;width:3px;height:344px;background:#0000c4;"></div>
<div class="r" style="left:22px;top:555px;width:866px;height:3px;background:#0000c4;"></div>
<svg class="s" style="left:345px;top:216px;" width="2" height="340" viewBox="0 0 2 340"><path d="M1 0 V340" stroke="#1a1a78" stroke-width="2" stroke-dasharray="10.08 2" stroke-dashoffset="2.68"/></svg>
<svg class="s" style="left:669px;top:216px;" width="2" height="340" viewBox="0 0 2 340"><path d="M1 0 V340" stroke="#1a1a78" stroke-width="2" stroke-dasharray="10.08 2" stroke-dashoffset="2.68"/></svg>
</body></html>
